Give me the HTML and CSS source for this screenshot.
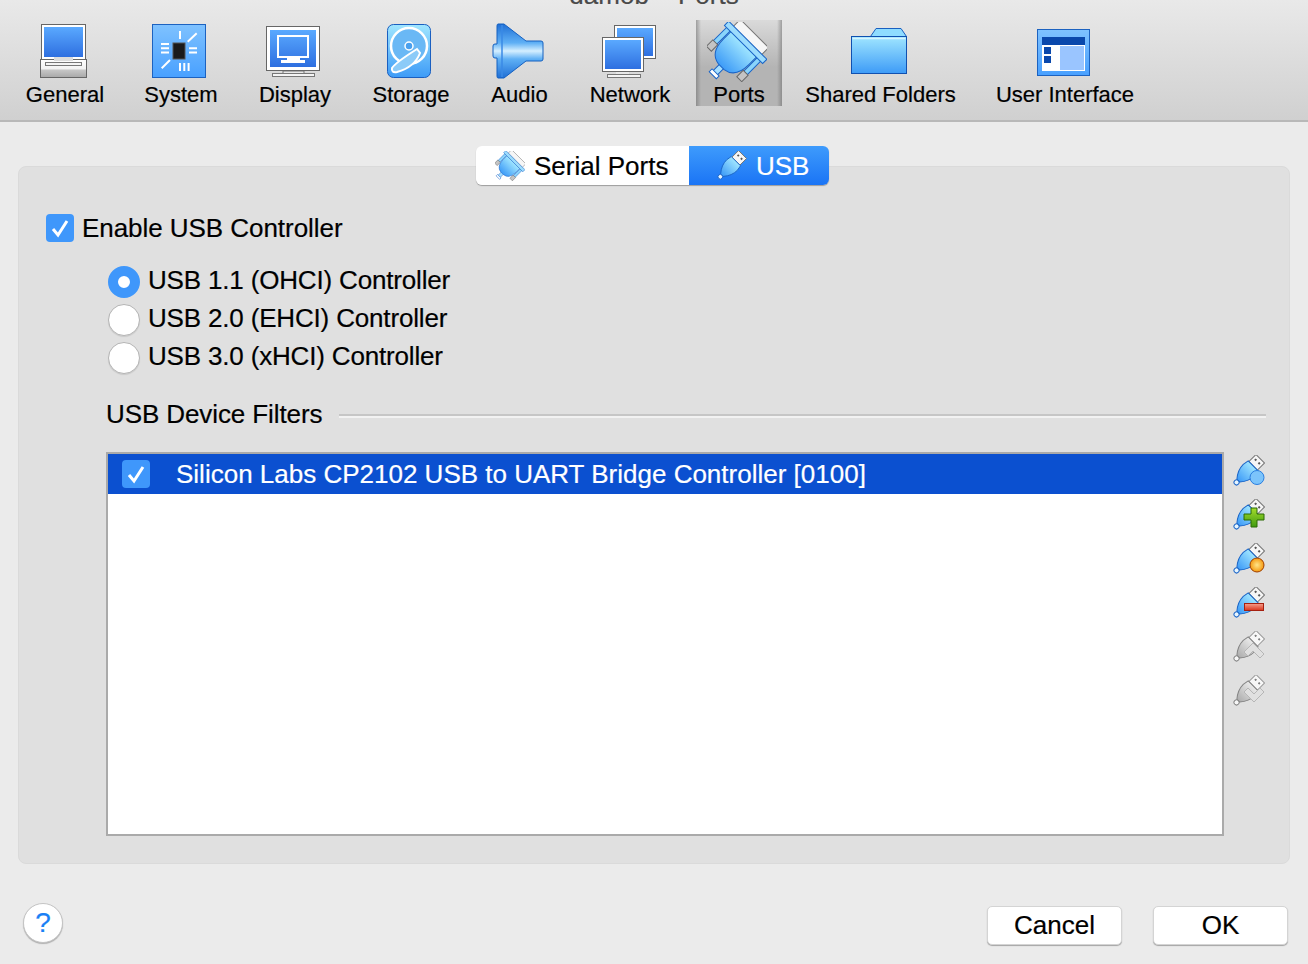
FILE: index.html
```html
<!DOCTYPE html>
<html lang="en">
<head>
    <meta charset="UTF-8">
    <meta name="viewport" content="width=device-width, initial-scale=1.0">
    <title>damob - Ports</title>
    <link rel="stylesheet" href="styles.css">
</head>
<body>
    <svg class="defs" width="0" height="0">
        <defs>
            <linearGradient id="gBlue" x1="0" y1="0" x2="0" y2="1">
                <stop offset="0" stop-color="#5aa9ff"/>
                <stop offset="1" stop-color="#2e6fe0"/>
            </linearGradient>
            <linearGradient id="gSky" x1="0" y1="0" x2="0" y2="1">
                <stop offset="0" stop-color="#a0e6ff"/>
                <stop offset="1" stop-color="#3d9bf7"/>
            </linearGradient>
            <linearGradient id="gTile" x1="0" y1="0" x2="0" y2="1">
                <stop offset="0" stop-color="#7fc2ff"/>
                <stop offset="1" stop-color="#48a0ff"/>
            </linearGradient>
            <linearGradient id="gCone" x1="0" y1="0" x2="0" y2="1">
                <stop offset="0" stop-color="#1f6fd6"/>
                <stop offset=".35" stop-color="#5fb0f5"/>
                <stop offset=".5" stop-color="#d5efff"/>
                <stop offset=".65" stop-color="#5fb0f5"/>
                <stop offset="1" stop-color="#1f6fd6"/>
            </linearGradient>
            <linearGradient id="gBase" x1="0" y1="0" x2="0" y2="1">
                <stop offset="0" stop-color="#ffffff"/>
                <stop offset=".55" stop-color="#f2f2f2"/>
                <stop offset=".56" stop-color="#c8c8c8"/>
                <stop offset="1" stop-color="#a8a8a8"/>
            </linearGradient>
            <linearGradient id="gGreen" x1="0" y1="0" x2="0" y2="1">
                <stop offset="0" stop-color="#a4dc2c"/>
                <stop offset="1" stop-color="#3f9a10"/>
            </linearGradient>
            <linearGradient id="gRed" x1="0" y1="0" x2="0" y2="1">
                <stop offset="0" stop-color="#f6a08c"/>
                <stop offset="1" stop-color="#d8341c"/>
            </linearGradient>
            <radialGradient id="gOrange">
                <stop offset="0" stop-color="#ffe58a"/>
                <stop offset="1" stop-color="#f59a10"/>
            </radialGradient>
            <symbol id="serial" viewBox="0 0 60 60">
                <g transform="translate(39 20) rotate(45)">
                    <rect x="-20" y="-12" width="40" height="10" fill="#f6f6f6" stroke="#777" stroke-width="1"/>
                    <rect x="-24" y="3" width="5" height="20" fill="#8ad4fb" stroke="#1a65c8"/>
                    <rect x="19" y="3" width="5" height="20" fill="#8ad4fb" stroke="#1a65c8"/>
                    <rect x="-25" y="22" width="7" height="9" fill="#c4c4c4" stroke="#666"/>
                    <rect x="18" y="22" width="7" height="9" fill="#c4c4c4" stroke="#666"/>
                    <rect x="-3" y="32" width="6" height="12" fill="#a8e0ff" stroke="#1a65c8"/>
                    <rect x="-5" y="43" width="10" height="4" fill="#fff" stroke="#1a65c8"/>
                    <path d="M-18 3H18V14Q18 33 4 35H-4Q-18 33-18 14Z" fill="url(#gSky)" stroke="#1a65c8"/>
                    <rect x="-27" y="-2.500" width="54" height="6" fill="#9cdcfd" stroke="#1a65c8"/>
                </g>
            </symbol>
            <symbol id="usb" viewBox="0 0 32 32">
                <g transform="translate(14.500 16.500) rotate(45)">
                    <rect x="-6" y="-18" width="12" height="10" fill="#f6f6f6" stroke="#777"/>
                    <rect x="-3.500" y="-15" width="2" height="2" fill="#555"/>
                    <rect x="1.500" y="-15" width="2" height="2" fill="#555"/>
                    <path d="M-7-8H7L8-2Q8 6 2 13H-2Q-8 6-8-2Z" fill="url(#gSky)" stroke="#1a65c8"/>
                    <circle cx="0" cy="15.500" r="2.500" fill="#e8f6ff" stroke="#1a65c8"/>
                </g>
            </symbol>
        </defs>
    </svg>

    <header class="toolbar">
        <div class="title"><span>damob - Ports</span></div>
        <nav class="tools">
            <div class="tool tool-general">
                <svg class="tool-icon" viewBox="0 0 64 62">
                    <rect x="8.500" y="4.500" width="44" height="35" fill="#fff" stroke="#666"/>
                    <rect x="11" y="7" width="39" height="30" fill="url(#gBlue)"/>
                    <rect x="7.500" y="39.500" width="46" height="18" fill="url(#gBase)" stroke="#666"/>
                    <rect x="21" y="37" width="19" height="4" fill="#ddd"/>
                    <rect x="12.500" y="42.500" width="36" height="3" fill="#f4f4f4" stroke="#777"/>
                </svg>
                <span>General</span>
            </div>
            <div class="tool tool-system">
                <svg class="tool-icon" viewBox="0 0 64 62">
                    <rect x="3.500" y="4.500" width="53" height="53" fill="url(#gTile)" stroke="#1c62c0"/>
                    <rect x="24" y="23" width="12" height="16" fill="#1a1a1a" stroke="#555"/>
                    <path d="M31 11v8M31 43v8M35.300 43v8M39.600 43v8M12 24h8M12 28.300h8M12 32.600h8M40 28.300h8M40 32.600h8M38.700 21.700l9-8.400M12.700 48.300l8.300-8.300" stroke="#fff" stroke-width="2" fill="none"/>
                </svg>
                <span>System</span>
            </div>
            <div class="tool tool-display">
                <svg class="tool-icon" viewBox="0 0 64 62">
                    <rect x="20" y="51" width="21" height="3" fill="#e8e8e8" stroke="#777"/>
                    <rect x="9.500" y="53.500" width="42" height="3" fill="#f4f4f4" stroke="#777"/>
                    <rect x="3.500" y="6.500" width="53" height="44" fill="#fff" stroke="#666"/>
                    <rect x="7" y="10" width="46" height="37" fill="url(#gBlue)"/>
                    <rect x="15" y="16" width="30" height="21" fill="none" stroke="#fff" stroke-width="2"/>
                    <rect x="24" y="38" width="13" height="3" fill="#fff"/>
                    <rect x="18" y="40" width="24" height="3" fill="#fff"/>
                </svg>
                <span>Display</span>
            </div>
            <div class="tool tool-storage">
                <svg class="tool-icon" viewBox="0 0 64 62">
                    <rect x="8.500" y="4.500" width="43" height="53" rx="6" fill="url(#gSky)" stroke="#1a5fc0"/>
                    <circle cx="30" cy="26" r="18" fill="#6ab8f5" stroke="#fff" stroke-width="2.500"/>
                    <circle cx="30" cy="26" r="4" fill="#4aa0ee" stroke="#fff" stroke-width="1.500"/>
                    <path d="M38 29L41 33Q36 47 18 52Q12 53 13 48Q16 43 38 29Z" fill="#8ccbf8" stroke="#fff" stroke-width="2"/>
                </svg>
                <span>Storage</span>
            </div>
            <div class="tool tool-audio">
                <svg class="tool-icon" viewBox="0 0 64 62">
                    <path d="M10 4h6L38 21H53Q55 21 55 23V39Q55 41 53 41H38L16 58H10Q9 58 9 56V38H7Q5 38 5 36V26Q5 24 7 24H9V6Q9 4 10 4Z" fill="url(#gCone)" stroke="#1560c0"/>
                    <path d="M14 5V57" stroke="#3a8ae6" stroke-width="1.500" fill="none"/>
                </svg>
                <span>Audio</span>
            </div>
            <div class="tool tool-network">
                <svg class="tool-icon" viewBox="0 0 64 62">
                    <rect x="29" y="39" width="14" height="3" fill="#f0f0f0" stroke="#777"/>
                    <rect x="16.500" y="5.500" width="41" height="33" fill="#fff" stroke="#666"/>
                    <rect x="19" y="8" width="36" height="28" fill="url(#gBlue)"/>
                    <rect x="18" y="52" width="13" height="3" fill="#e8e8e8"/>
                    <rect x="9.500" y="54.500" width="33" height="3" fill="#f4f4f4" stroke="#777"/>
                    <rect x="4.500" y="17.500" width="41" height="34" fill="#fff" stroke="#666"/>
                    <rect x="7" y="20" width="36" height="29" fill="url(#gBlue)"/>
                </svg>
                <span>Network</span>
            </div>
            <div class="tool tool-ports active">
                <svg class="tool-icon" viewBox="0 0 64 62">
                    <use href="#serial" x="0" y="2" width="60" height="60"/>
                </svg>
                <span>Ports</span>
            </div>
            <div class="tool tool-shared">
                <svg class="tool-icon" viewBox="0 0 64 62">
                    <path d="M21.500 16.500L27 8.500H52L57.500 16.500Z" fill="#8fdcff" stroke="#1a5fc0"/>
                    <rect x="2.500" y="16.500" width="55" height="37" fill="url(#gSky)" stroke="#1050b0"/>
                    <path d="M3.500 18.500H56.500" stroke="#d8f4ff" stroke-width="1.500" fill="none"/>
                </svg>
                <span>Shared Folders</span>
            </div>
            <div class="tool tool-ui">
                <svg class="tool-icon" viewBox="0 0 64 62">
                    <rect x="4.500" y="9.500" width="52" height="46" fill="url(#gTile)" stroke="#1c62c0"/>
                    <rect x="9" y="17" width="43" height="8" fill="#0a48ac"/>
                    <rect x="9" y="25" width="43" height="26" fill="#fff"/>
                    <rect x="27" y="26" width="24" height="24" fill="#9ac5ff"/>
                    <rect x="11" y="27" width="7" height="7" fill="#0a48ac"/>
                    <rect x="11" y="36" width="7" height="7" fill="#0a48ac"/>
                </svg>
                <span>User Interface</span>
            </div>
        </nav>
    </header>

    <main class="panel">
        <div class="segments">
            <div class="segment">
                <svg class="seg-icon" viewBox="0 0 30 30"><use href="#serial" width="30" height="30"/></svg>
                <span>Serial Ports</span>
            </div>
            <div class="segment selected">
                <svg class="seg-icon" viewBox="0 0 30 30"><use href="#usb" width="30" height="30"/></svg>
                <span>USB</span>
            </div>
        </div>

        <label class="enable">
            <span class="check"><svg viewBox="0 0 28 28"><path d="M7 15l5 6 9-14" fill="none" stroke="#fff" stroke-width="3"/></svg></span>
            Enable USB Controller
        </label>

        <div class="radios">
            <label class="radio-row"><span class="radio on"></span>USB 1.1 (OHCI) Controller</label>
            <label class="radio-row"><span class="radio"></span>USB 2.0 (EHCI) Controller</label>
            <label class="radio-row"><span class="radio"></span>USB 3.0 (xHCI) Controller</label>
        </div>

        <div class="legend">
            <span>USB Device Filters</span>
            <div class="legend-line"></div>
        </div>

        <div class="filters">
            <div class="filter-list">
                <div class="filter-row">
                    <span class="check"><svg viewBox="0 0 28 28"><path d="M7 15l5 6 9-14" fill="none" stroke="#fff" stroke-width="3"/></svg></span>
                    <span class="filter-name">Silicon Labs CP2102 USB to UART Bridge Controller [0100]</span>
                </div>
            </div>
            <div class="filter-tools">
                <svg viewBox="0 0 32 32">
                    <use href="#usb" width="32" height="32"/>
                    <circle cx="24" cy="22.500" r="7" fill="#7cc4fb" stroke="#2a7ee0"/>
                </svg>
                <svg viewBox="0 0 32 32">
                    <use href="#usb" width="32" height="32"/>
                    <path d="M18 9h6v6h7v6h-7v7h-6v-7h-7v-6h7z" fill="url(#gGreen)" stroke="#2a6a05"/>
                </svg>
                <svg viewBox="0 0 32 32">
                    <use href="#usb" width="32" height="32"/>
                    <circle cx="24" cy="22" r="7" fill="url(#gOrange)" stroke="#a04000"/>
                </svg>
                <svg viewBox="0 0 32 32">
                    <use href="#usb" width="32" height="32"/>
                    <rect x="11.500" y="16.500" width="19" height="7" fill="url(#gRed)" stroke="#a52010"/>
                </svg>
                <svg class="off" viewBox="0 0 32 32">
                    <use href="#usb" width="32" height="32"/>
                    <path d="M11 21L20 12L31 23L27 27L20 20L15 25Z" fill="#ccc" stroke="#999"/>
                </svg>
                <svg class="off" viewBox="0 0 32 32">
                    <use href="#usb" width="32" height="32"/>
                    <path d="M11 17L15 13L21 19L27 13L31 17L21 27Z" fill="#ccc" stroke="#999"/>
                </svg>
            </div>
        </div>
    </main>

    <footer class="footer">
        <button class="help">?</button>
        <div class="actions">
            <button class="btn">Cancel</button>
            <button class="btn">OK</button>
        </div>
    </footer>
</body>
</html>
```

FILE: styles.css
```css
body {
    font-family: "Liberation Sans", Arial, sans-serif;
    background-color: #ebebeb;
    color: #000;
    margin: 0;
    width: 1308px;
    height: 964px;
    overflow: hidden;
    -webkit-text-stroke: 0.2px;
}
.defs {
    display: block;
}
.toolbar {
    box-sizing: border-box;
    height: 122px;
    background: linear-gradient(#e9e9e9, #d0d0d0);
    border-bottom: 2px solid #b8b8b8;
}
.title {
    height: 4px;
    overflow: hidden;
    display: flex;
    justify-content: center;
    align-items: flex-end;
    font-size: 26px;
    line-height: 26px;
    word-spacing: 3px;
    color: #4a4a4a;
}
.title span {
    margin-bottom: -4px;
}
.tools {
    display: flex;
    gap: 41px;
    margin-top: 16px;
    padding-left: 27px;
}
.tool {
    display: flex;
    flex-direction: column;
    align-items: center;
    flex: none;
    font-size: 22px;
    line-height: 24px;
    height: 86px;
    white-space: nowrap;
}
.tool span {
    margin-top: 1px;
}
.tool-icon {
    width: 64px;
    height: 62px;
    flex: none;
    margin: 0 -30px;
}
.tool-general { width: 76px; }
.tool-system { width: 74px; }
.tool-display { width: 72px; }
.tool-storage { width: 78px; }
.tool-audio { width: 57px; }
.tool-network { width: 82px; }
.tool-ports { width: 86px; }
.tool-shared { width: 149px; }
.tool-ui { width: 138px; }
.tool.active {
    margin: 0 -17px 0 -16px;
    background: linear-gradient(90deg, rgba(110, 110, 110, 0.55), transparent 5px, transparent calc(100% - 5px), rgba(110, 110, 110, 0.55)), linear-gradient(#dadada, #b4b4b4 55%, #b4b4b4);
}
.panel {
    box-sizing: border-box;
    height: 698px;
    margin: 44px 18px 0 18px;
    padding: 0 23px 0 27px;
    background-color: #e0e0e0;
    border: 1px solid #dadada;
    border-radius: 8px;
    font-size: 26px;
}
.segments {
    display: flex;
    width: 353px;
    height: 39px;
    margin: -21px 0 0 430px;
    border-radius: 6px;
    box-shadow: 0 1px 1px rgba(0, 0, 0, 0.3);
    overflow: hidden;
}
.segment {
    display: flex;
    align-items: center;
    gap: 9px;
    width: 213px;
    padding-left: 19px;
    box-sizing: border-box;
    background-color: #fff;
}
.segment span {
    margin-top: 1px;
}
.segment.selected {
    width: 140px;
    padding-left: 28px;
    background: linear-gradient(#3e9bfc, #1a74f5);
    color: #fff;
}
.seg-icon {
    width: 30px;
    height: 30px;
}
.enable {
    display: flex;
    align-items: center;
    gap: 8px;
    height: 38px;
    margin-top: 24px;
    letter-spacing: -0.05px;
}
.check {
    display: block;
    flex: none;
    width: 28px;
    height: 28px;
    background-color: #3f97fb;
    border-radius: 4px;
}
.check svg {
    display: block;
}
.radios {
    margin: 14px 0 0 62px;
    letter-spacing: -0.17px;
}
.radio-row {
    display: flex;
    align-items: center;
    gap: 8px;
    height: 38px;
}
.radio {
    box-sizing: border-box;
    width: 32px;
    height: 32px;
    margin-top: 4px;
    border-radius: 50%;
    background-color: #fff;
    border: 1px solid #b4b4b4;
    box-shadow: 0 1px 1px rgba(0, 0, 0, 0.1);
}
.radio.on {
    border: 10px solid #3f97fb;
    box-shadow: none;
}
.legend {
    display: flex;
    align-items: center;
    gap: 17px;
    height: 32px;
    margin: 23px 0 0 60px;
    letter-spacing: -0.1px;
}
.legend-line {
    flex: 1;
    height: 2px;
    margin-top: 3px;
    background-color: #c6c6c6;
    border-bottom: 2px solid #f2f2f2;
}
.filters {
    display: flex;
    margin: 22px 0 0 60px;
}
.filter-list {
    box-sizing: border-box;
    width: 1118px;
    height: 384px;
    background-color: #fff;
    border: 2px solid #aaa;
}
.filter-row {
    display: flex;
    align-items: center;
    height: 40px;
    padding-left: 14px;
    background-color: #0b50d0;
    color: #fff;
}
.filter-name {
    margin-left: 26px;
}
.filter-tools {
    display: flex;
    flex-direction: column;
    gap: 12px;
    margin: 3px 0 0 9px;
}
.filter-tools svg {
    display: block;
    width: 32px;
    height: 32px;
}
.filter-tools .off {
    filter: grayscale(1) brightness(1.1);
    opacity: 0.75;
}
.footer {
    display: flex;
    justify-content: space-between;
    margin-top: 39px;
    padding: 0 20px 0 23px;
}
.help {
    width: 40px;
    height: 40px;
    padding: 0;
    border: 1px solid #c4c4c4;
    border-radius: 50%;
    background-color: #fff;
    box-shadow: 0 1px 1px rgba(0, 0, 0, 0.25);
    color: #1a7ff5;
    font-family: "Liberation Sans", Arial, sans-serif;
    font-size: 28px;
}
.actions {
    display: flex;
    gap: 31px;
    margin-top: 3px;
}
.btn {
    width: 135px;
    height: 39px;
    padding: 0;
    border: 1px solid #d4d4d4;
    border-radius: 5px;
    background-color: #fff;
    box-shadow: 0 1px 1px rgba(0, 0, 0, 0.3);
    color: #000;
    font-family: "Liberation Sans", Arial, sans-serif;
    font-size: 26px;
}
```
